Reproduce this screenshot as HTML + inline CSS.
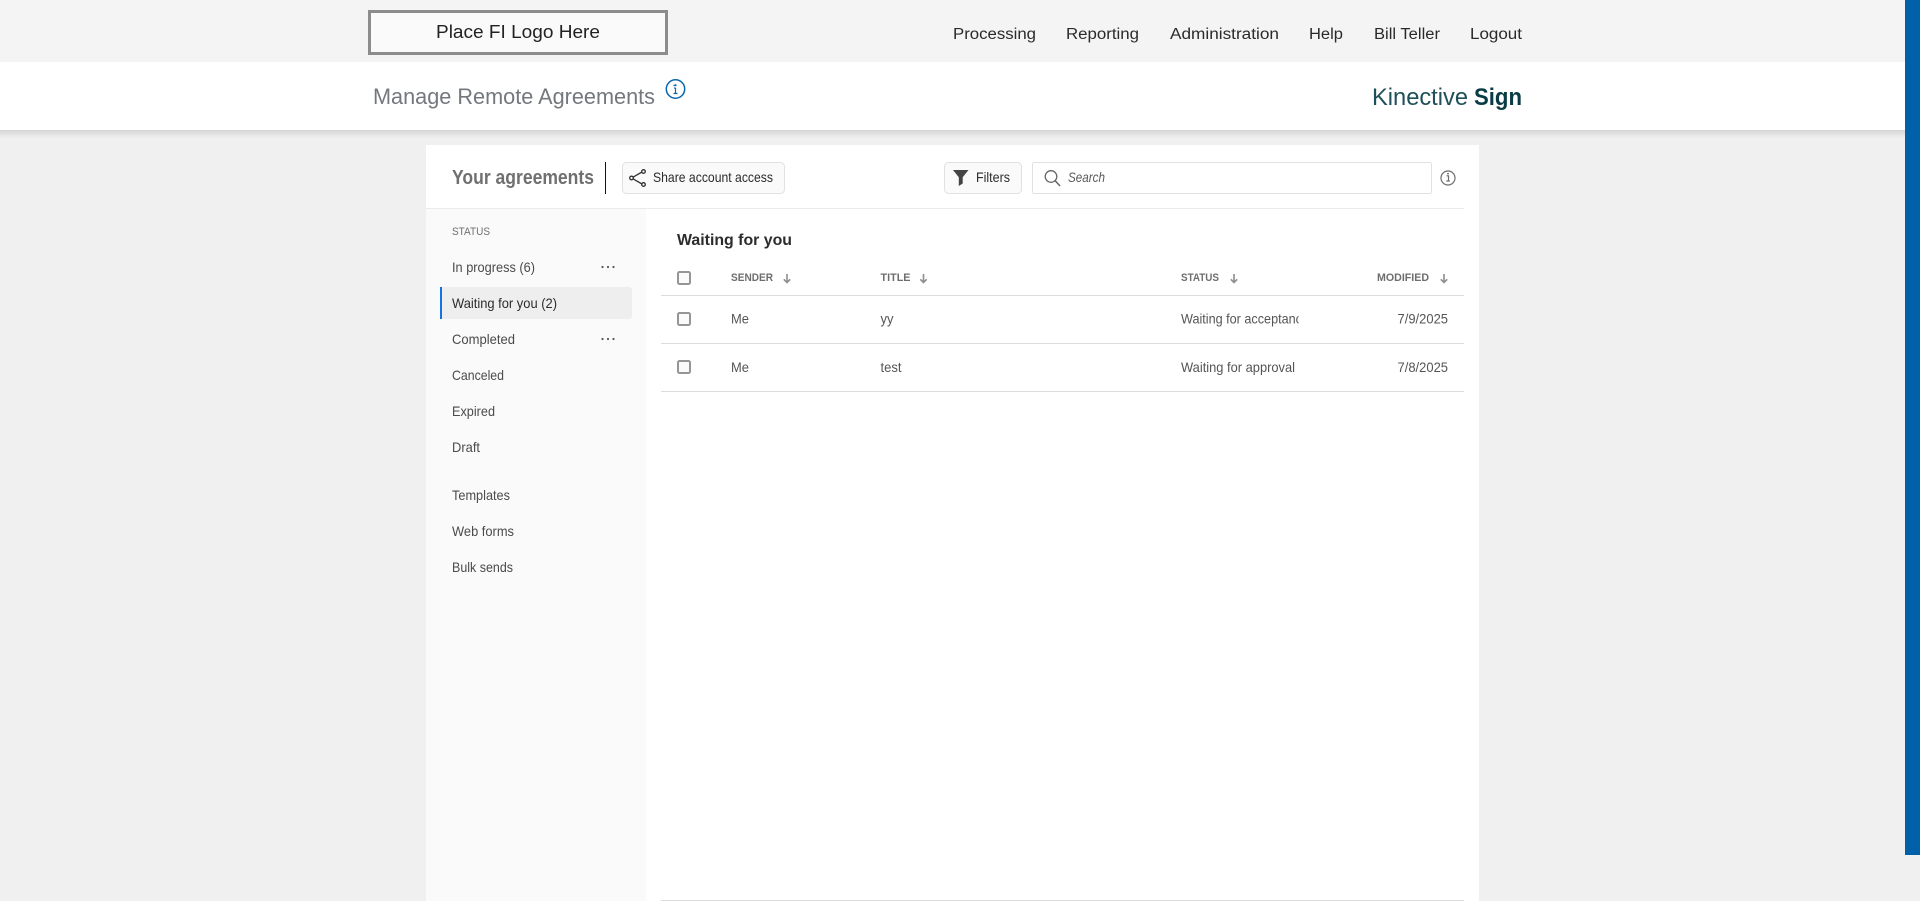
<!DOCTYPE html>
<html lang="en">
<head>
<meta charset="utf-8">
<title>Manage Remote Agreements</title>
<style>
html,body{margin:0;padding:0;width:1920px;height:901px;overflow:hidden;background:#f0f0f0}
svg{display:block;position:absolute;left:0;top:0}
text{font-family:"Liberation Sans",sans-serif;white-space:pre}
.nav{font-size:15.500px;fill:#2a2a2a}
.side{font-size:14px;fill:#4b4b4b}
.cell{font-size:14px;fill:#555}
.th{font-size:11px;font-weight:bold;fill:#6e6e6e}
.btn{font-size:14px;fill:#2c2c2c}
.arrow{fill:none;stroke:#8e8e8e;stroke-width:1.6}
.chk{fill:#fafafa;stroke:#959595;stroke-width:2}
</style>
</head>
<body>
<svg width="1920" height="901" viewBox="0 0 1920 901" xmlns="http://www.w3.org/2000/svg">
  <defs>
    <linearGradient id="sh" x1="0" y1="0" x2="0" y2="1">
      <stop offset="0" stop-color="#d6d6d6"/>
      <stop offset="1" stop-color="#f0f0f0"/>
    </linearGradient>
    <clipPath id="clipStatus"><rect x="1181" y="305" width="117.6" height="28"/></clipPath>
  </defs>

  <!-- page -->
  <rect x="0" y="0" width="1920" height="901" fill="#f0f0f0"/>
  <rect x="0" y="0" width="1920" height="62" fill="#f4f4f4"/>
  <rect x="0" y="62" width="1920" height="68" fill="#fff"/>
  <rect x="0" y="130" width="1920" height="8" fill="url(#sh)"/>

  <!-- logo -->
  <rect x="369.500" y="11.500" width="297" height="42" fill="#fafafa" stroke="#8c8c8c" stroke-width="3"/>
  <text x="436" y="38" font-size="18.500" fill="#222" textLength="164" lengthAdjust="spacingAndGlyphs">Place FI Logo Here</text>

  <!-- nav -->
  <text class="nav" x="953" y="39" textLength="83" lengthAdjust="spacingAndGlyphs">Processing</text>
  <text class="nav" x="1066" y="39" textLength="73" lengthAdjust="spacingAndGlyphs">Reporting</text>
  <text class="nav" x="1170" y="39" textLength="109" lengthAdjust="spacingAndGlyphs">Administration</text>
  <text class="nav" x="1309" y="39" textLength="34" lengthAdjust="spacingAndGlyphs">Help</text>
  <text class="nav" x="1374" y="39" textLength="66" lengthAdjust="spacingAndGlyphs">Bill Teller</text>
  <text class="nav" x="1470" y="39" textLength="52" lengthAdjust="spacingAndGlyphs">Logout</text>

  <!-- sub header -->
  <text x="373" y="104" font-size="22" fill="#74787d" textLength="282" lengthAdjust="spacingAndGlyphs">Manage Remote Agreements</text>
  <circle cx="675.500" cy="89" r="9.200" fill="#fff" stroke="#0a66ad" stroke-width="1.500"/>
  <path d="M673.500 85.500h3M675.500 88v5M673.500 93.500h4M674 88h1.500" fill="none" stroke="#0a66ad" stroke-width="1.200"/>
  <circle cx="675.500" cy="85" r="0.900" fill="#0a66ad"/>
  <text x="1372" y="105" font-size="24" fill="#1f5059" textLength="96" lengthAdjust="spacingAndGlyphs">Kinective</text>
  <text x="1474" y="105" font-size="24" font-weight="bold" fill="#0a3c46" textLength="48" lengthAdjust="spacingAndGlyphs">Sign</text>

  <!-- scrollbar -->
  <rect x="1905" y="0" width="15" height="855" fill="#0060a8"/>

  <!-- card -->
  <rect x="426" y="145" width="1053" height="756" fill="#fff"/>
  <rect x="426" y="209" width="220" height="692" fill="#fafafa"/>
  <rect x="426" y="208" width="1038" height="1" fill="#eaeaea"/>

  <!-- card header -->
  <text x="452" y="184" font-size="20" font-weight="bold" fill="#707070" textLength="142" lengthAdjust="spacingAndGlyphs">Your agreements</text>
  <rect x="605" y="162" width="1" height="32" fill="#111"/>
  <rect x="622.500" y="162.500" width="162" height="31" rx="4" fill="#fafafa" stroke="#e1e1e1"/>
  <g fill="#fafafa" stroke="#333" stroke-width="1.300">
    <path d="M632.500 177.500L642 172M632.500 178.500L642 184" fill="none"/>
    <circle cx="631.500" cy="178" r="1.800"/>
    <circle cx="643.500" cy="171.500" r="1.800"/>
    <circle cx="643.500" cy="184.500" r="1.800"/>
  </g>
  <text class="btn" x="653" y="182" textLength="120" lengthAdjust="spacingAndGlyphs">Share account access</text>

  <rect x="944.500" y="162.500" width="77" height="31" rx="4" fill="#fafafa" stroke="#e1e1e1"/>
  <path d="M953 170h15.500l-5.800 7.200v6.300l-3.900 2.500v-8.800z" fill="#444"/>
  <text class="btn" x="976" y="182" textLength="34" lengthAdjust="spacingAndGlyphs">Filters</text>

  <rect x="1032.500" y="162.500" width="399" height="31" rx="2" fill="#fff" stroke="#e1e1e1"/>
  <circle cx="1051" cy="176.500" r="5.800" fill="none" stroke="#666" stroke-width="1.300"/>
  <path d="M1055.200 180.800L1060 186" fill="none" stroke="#666" stroke-width="1.500"/>
  <text x="1068" y="182" font-size="14" font-style="italic" fill="#5a5a5a" textLength="37" lengthAdjust="spacingAndGlyphs">Search</text>

  <circle cx="1448" cy="178" r="7" fill="#fff" stroke="#6e6e6e" stroke-width="1.200"/>
  <path d="M1446.500 175.800h2v5M1446.300 181h3.500" fill="none" stroke="#6e6e6e" stroke-width="1.200"/>
  <circle cx="1448" cy="173.700" r="0.900" fill="#6e6e6e"/>

  <!-- sidebar -->
  <text x="452" y="235" font-size="11" fill="#6e6e6e" textLength="38" lengthAdjust="spacingAndGlyphs">STATUS</text>
  <text class="side" x="452" y="272" textLength="83" lengthAdjust="spacingAndGlyphs">In progress (6)</text>
  <g fill="#555">
    <circle cx="602.500" cy="267" r="1.100"/><circle cx="608" cy="267" r="1.100"/><circle cx="613.500" cy="267" r="1.100"/>
    <circle cx="602.500" cy="339" r="1.100"/><circle cx="608" cy="339" r="1.100"/><circle cx="613.500" cy="339" r="1.100"/>
  </g>
  <rect x="440" y="287" width="192" height="32" rx="3" fill="#eee"/>
  <rect x="440" y="287" width="2" height="32" fill="#1473e6"/>
  <text class="side" x="452" y="308" style="fill:#2c2c2c" textLength="105" lengthAdjust="spacingAndGlyphs">Waiting for you (2)</text>
  <text class="side" x="452" y="344" textLength="63" lengthAdjust="spacingAndGlyphs">Completed</text>
  <text class="side" x="452" y="380" textLength="52" lengthAdjust="spacingAndGlyphs">Canceled</text>
  <text class="side" x="452" y="416" textLength="43" lengthAdjust="spacingAndGlyphs">Expired</text>
  <text class="side" x="452" y="452" textLength="28" lengthAdjust="spacingAndGlyphs">Draft</text>
  <text class="side" x="452" y="500" textLength="58" lengthAdjust="spacingAndGlyphs">Templates</text>
  <text class="side" x="452" y="536" textLength="62" lengthAdjust="spacingAndGlyphs">Web forms</text>
  <text class="side" x="452" y="572" textLength="61" lengthAdjust="spacingAndGlyphs">Bulk sends</text>

  <!-- list -->
  <text x="677" y="245" font-size="16" font-weight="bold" fill="#2c2c2c" textLength="115" lengthAdjust="spacingAndGlyphs">Waiting for you</text>

  <rect class="chk" x="678" y="272" width="12" height="12" rx="1.500"/>
  <text class="th" x="731" y="281" textLength="42" lengthAdjust="spacingAndGlyphs">SENDER</text>
  <path class="arrow" d="M787 274v8.500M783.800 279.300l3.200 3.200 3.200-3.200"/>
  <text class="th" x="880.500" y="281" textLength="30" lengthAdjust="spacingAndGlyphs">TITLE</text>
  <path class="arrow" d="M923.500 274v8.500M920.300 279.300l3.200 3.200 3.200-3.200"/>
  <text class="th" x="1181" y="281" textLength="38" lengthAdjust="spacingAndGlyphs">STATUS</text>
  <path class="arrow" d="M1234 274v8.500M1230.800 279.300l3.200 3.200 3.200-3.200"/>
  <text class="th" x="1377" y="281" textLength="52" lengthAdjust="spacingAndGlyphs">MODIFIED</text>
  <path class="arrow" d="M1444 274v8.500M1440.800 279.300l3.200 3.200 3.200-3.200"/>

  <rect x="661" y="295" width="803" height="1" fill="#dcdcdc"/>
  <rect class="chk" x="678" y="313" width="12" height="12" rx="1.500"/>
  <text class="cell" x="731" y="323.500" textLength="18" lengthAdjust="spacingAndGlyphs">Me</text>
  <text class="cell" x="880.500" y="323.500" textLength="13" lengthAdjust="spacingAndGlyphs">yy</text>
  <g clip-path="url(#clipStatus)">
    <text class="cell" x="1181" y="323.500" textLength="128" lengthAdjust="spacingAndGlyphs">Waiting for acceptance</text>
  </g>
  <text class="cell" x="1397.500" y="323.500" textLength="50.500" lengthAdjust="spacingAndGlyphs">7/9/2025</text>

  <rect x="661" y="343" width="803" height="1" fill="#dcdcdc"/>
  <rect class="chk" x="678" y="361" width="12" height="12" rx="1.500"/>
  <text class="cell" x="731" y="372" textLength="18" lengthAdjust="spacingAndGlyphs">Me</text>
  <text class="cell" x="880.500" y="372" textLength="21" lengthAdjust="spacingAndGlyphs">test</text>
  <text class="cell" x="1181" y="372" textLength="114" lengthAdjust="spacingAndGlyphs">Waiting for approval</text>
  <text class="cell" x="1397.500" y="372" textLength="50.500" lengthAdjust="spacingAndGlyphs">7/8/2025</text>

  <rect x="661" y="391" width="803" height="1" fill="#dcdcdc"/>
  <rect x="661" y="900" width="803" height="1" fill="#dcdcdc"/>
</svg>
</body>
</html>
